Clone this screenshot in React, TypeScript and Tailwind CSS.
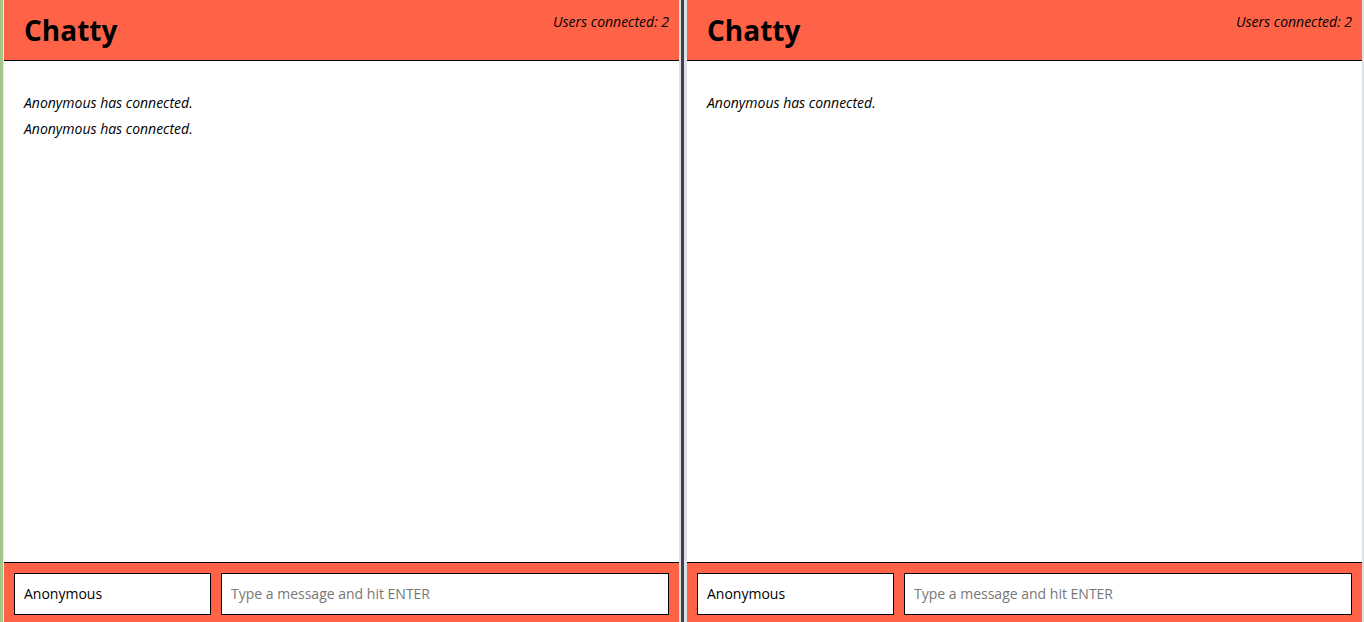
const MESSAGES_LEFT = ["Anonymous has connected.", "Anonymous has connected."];
const MESSAGES_RIGHT = ["Anonymous has connected."];

function ChatPane({ messages }: { messages: string[] }) {
  return (
    <div className="flex h-full w-[675px] shrink-0 flex-col bg-white">
      {/* ── HEADER ── */}
      <nav className="flex h-[61px] shrink-0 items-start justify-between border-b border-black bg-[#ff6347] pl-[20px] pr-[10px]">
        <h1 className="mt-[12px] text-[28px] leading-[36px] font-bold text-black">
          Chatty
        </h1>
        <span className="mt-[12px] text-[14px] italic leading-[20px] text-black">
          Users connected: 2
        </span>
      </nav>

      {/* ── MESSAGES ── */}
      <main className="flex flex-1 flex-col gap-[6px] px-[20px] pt-[32px]">
        {messages.map((m, i) => (
          <div key={i} className="text-[14px] italic leading-[20px] text-black">
            {m}
          </div>
        ))}
      </main>

      {/* ── FOOTER ── */}
      <footer className="flex h-[60px] shrink-0 gap-[10px] border-t border-black bg-[#ff6347] px-[10px] pt-[10px]">
        <input
          className="h-[42px] w-[197px] border border-black bg-white px-[9px] pb-[2px] text-[14px] text-black outline-none"
          defaultValue="Anonymous"
        />
        <input
          className="h-[42px] flex-1 border border-black bg-white px-[9px] pb-[2px] text-[14px] text-black outline-none placeholder:text-[#777]"
          placeholder="Type a message and hit ENTER"
        />
      </footer>
    </div>
  );
}

export default function App() {
  return (
    <div
      className="flex h-[622px] w-[1364px] overflow-hidden bg-white"
      style={{ fontFamily: '"Open Sans", sans-serif' }}
    >
      <div className="w-[3px] shrink-0 bg-[#a6c58a]" />
      <div className="w-[1px] shrink-0 bg-[#e6e9ec]" />
      <ChatPane messages={MESSAGES_LEFT} />
      <div className="w-[2px] shrink-0 bg-[#dde0e4]" />
      <div className="w-[3px] shrink-0 bg-[#3f4144]" />
      <div className="w-[3px] shrink-0 bg-[#dde0e4]" />
      <ChatPane messages={MESSAGES_RIGHT} />
      <div className="w-[2px] shrink-0 bg-[#dde0e4]" />
    </div>
  );
}
